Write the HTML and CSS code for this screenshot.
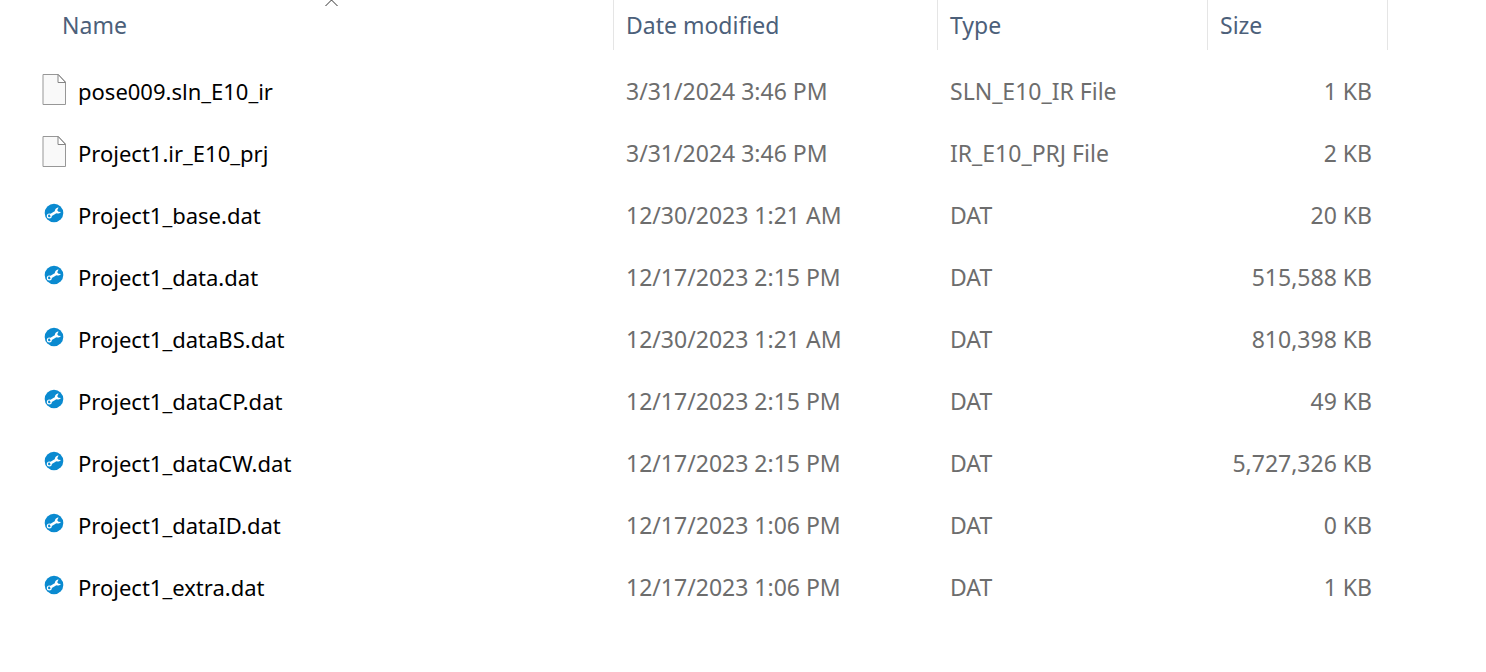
FILE: index.html
```html
<!DOCTYPE html>
<html lang="en">
<head>
<meta charset="utf-8">
<title>Files</title>
<link rel="stylesheet" href="styles.css">
</head>
<body>
<svg class="defs" aria-hidden="true">
<symbol id="page" viewBox="0 0 24 31"><path d="M1 .5H16.500L23.500 8V30.500H1Z" fill="#f9f9f9" stroke="#979797"/><path d="M16 .5V8.500H23.500Z" fill="#fff" stroke="#858585"/></symbol>
<symbol id="dat" viewBox="0 0 20 20"><circle cx="10" cy="10" r="9.300" fill="#0a8ad0"/><path d="M6.300 12.300 13 8.300" stroke="#fff" stroke-width="2.600"/><circle cx="5.300" cy="12.900" r="1.900" fill="none" stroke="#fff" stroke-width="1.200"/><path d="M14.600 4.400C12.300 4.500 10.500 6.300 11 8.600C11.700 10.900 14.800 11.200 17 8.900L14.500 8.700L13.200 7.200Z" fill="#fff"/></symbol>
</svg>
<table class="files">
<colgroup><col class="c-name"><col class="c-date"><col class="c-type"><col class="c-size"><col></colgroup>
<thead><tr><th class="sorted">Name<svg class="caret" viewBox="0 0 14 7"><path d="M.5 6 6.500 0 12.500 6" fill="none" stroke="#333"/></svg></th><th>Date modified</th><th>Type</th><th>Size</th><th></th></tr></thead>
<tbody>
<tr><td><div class="file"><svg class="page"><use href="#page"/></svg><span>pose009.sln_E10_ir</span></div></td><td>3/31/2024 3:46 PM</td><td>SLN_E10_IR File</td><td>1 KB</td><td></td></tr>
<tr><td><div class="file"><svg class="page"><use href="#page"/></svg><span>Project1.ir_E10_prj</span></div></td><td>3/31/2024 3:46 PM</td><td>IR_E10_PRJ File</td><td>2 KB</td><td></td></tr>
<tr><td><div class="file"><svg class="dat"><use href="#dat"/></svg><span>Project1_base.dat</span></div></td><td>12/30/2023 1:21 AM</td><td>DAT</td><td>20 KB</td><td></td></tr>
<tr><td><div class="file"><svg class="dat"><use href="#dat"/></svg><span>Project1_data.dat</span></div></td><td>12/17/2023 2:15 PM</td><td>DAT</td><td>515,588 KB</td><td></td></tr>
<tr><td><div class="file"><svg class="dat"><use href="#dat"/></svg><span>Project1_dataBS.dat</span></div></td><td>12/30/2023 1:21 AM</td><td>DAT</td><td>810,398 KB</td><td></td></tr>
<tr><td><div class="file"><svg class="dat"><use href="#dat"/></svg><span>Project1_dataCP.dat</span></div></td><td>12/17/2023 2:15 PM</td><td>DAT</td><td>49 KB</td><td></td></tr>
<tr><td><div class="file"><svg class="dat"><use href="#dat"/></svg><span>Project1_dataCW.dat</span></div></td><td>12/17/2023 2:15 PM</td><td>DAT</td><td>5,727,326 KB</td><td></td></tr>
<tr><td><div class="file"><svg class="dat"><use href="#dat"/></svg><span>Project1_dataID.dat</span></div></td><td>12/17/2023 1:06 PM</td><td>DAT</td><td>0 KB</td><td></td></tr>
<tr><td><div class="file"><svg class="dat"><use href="#dat"/></svg><span>Project1_extra.dat</span></div></td><td>12/17/2023 1:06 PM</td><td>DAT</td><td>1 KB</td><td></td></tr>
</tbody>
</table>
</body>
</html>
```
FILE: styles.css
```css
body { margin: 0; background: #fff; font: 23px/32px "Segoe UI", "Noto Sans", "Open Sans", sans-serif; color: #6d6d6d; }
.defs { position: absolute; width: 0; height: 0; }
.files { width: 100%; border-collapse: separate; border-spacing: 0; table-layout: fixed; }
.c-name { width: 614px; }
.c-date { width: 324px; }
.c-type { width: 270px; }
.c-size { width: 180px; }
th { height: 50px; padding: 0 12px; border-right: 1px solid #e5e5e5; box-sizing: border-box; text-align: left; font-weight: 400; color: #4c607a; }
th:first-child { padding-left: 62px; }
th:last-child { border: 0; }
.sorted { position: relative; }
.caret { position: absolute; top: 0; left: 325px; width: 14px; height: 7px; }
tbody::before { content: ""; display: block; height: 10px; }
td { height: 62px; padding: 0 12px; }
td:first-child { padding-left: 42px; color: #000; font-size: 22px; }
td:nth-child(4) { padding-right: 16px; text-align: right; }
.file { display: flex; align-items: center; gap: 12px; }
.page { width: 24px; height: 31px; margin-bottom: 4px; }
.dat { width: 20px; height: 20px; margin: 0 2px 4px; }
```
